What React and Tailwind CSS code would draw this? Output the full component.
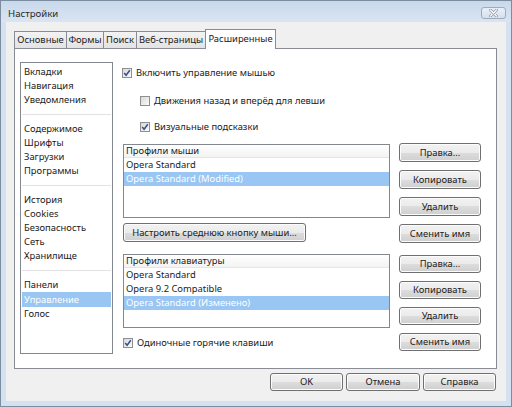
import React from 'react'

const font = "font-['Noto_Sans',sans-serif] text-[9.4px] text-[#1b1b1b]"

const Check = ({ checked }) => (
  <span className="flex h-[10px] w-[10px] shrink-0 items-center justify-center border border-[#8f8f8f] bg-gradient-to-br from-[#d8d8d8] to-[#fbfbfb]">
    {checked && (
      <svg width="8" height="8" viewBox="0 0 8 8">
        <path d="M1.2 4 L3.1 6.3 L6.8 1.3" fill="none" stroke="#35508a" strokeWidth="1.5" />
      </svg>
    )}
  </span>
)

const CheckRow = ({ checked, label, className = '' }) => (
  <div className={`flex h-[14px] items-center gap-[4px] ${className}`}>
    <Check checked={checked} />
    <span className="whitespace-nowrap leading-none">{label}</span>
  </div>
)

const Btn = ({ children, className = '' }) => (
  <div
    className={`flex items-center justify-center whitespace-nowrap rounded-[3px] border border-[#707070] bg-[linear-gradient(#f2f2f2_0%,#ebebeb_50%,#dddddd_50%,#cfcfcf_100%)] leading-none shadow-[inset_0_0_0_1px_#fcfcfc] ${className}`}>
    {children}
  </div>
)

const ProfileList = ({ title, items, selected }) => (
  <div className="flex h-[74px] w-[267px] flex-col border border-[#828790] bg-white">
    <div className="flex h-[13px] items-center border-b border-[#e5e5e5] bg-gradient-to-b from-white to-[#f3f3f3] pl-[2px] leading-none">
      {title}
    </div>
    {items.map((it, i) => (
      <div
        key={it}
        className={`flex h-[14px] items-center whitespace-nowrap pl-[2px] leading-none ${
          i === selected ? 'bg-[#99c6f2] text-white' : ''
        }`}>
        {it}
      </div>
    ))}
  </div>
)

const tabs = [
  { label: 'Основные', w: 'w-[53px]' },
  { label: 'Формы', w: 'w-[38px]' },
  { label: 'Поиск', w: 'w-[34px]' },
  { label: 'Веб-страницы', w: 'w-[70px]' },
]

const groups = [
  ['Вкладки', 'Навигация', 'Уведомления'],
  ['Содержимое', 'Шрифты', 'Загрузки', 'Программы'],
  ['История', 'Cookies', 'Безопасность', 'Сеть', 'Хранилище'],
  ['Панели', 'Управление', 'Голос'],
]

export default function App() {
  return (
    <div className={`flex h-[407px] w-[512px] flex-col border border-[#7d8da0] bg-[#d3e1f1] ${font}`}>
      {/* title bar */}
      <div className="flex h-[21px] shrink-0 items-center justify-between bg-gradient-to-b from-[#c9d8ec] to-[#dae5f2] pl-[7px] pr-[5px]">
        <span className="mt-[5px] text-[9.6px] text-[#2a2a2a]">Настройки</span>
        <div className="mt-[3px] flex h-[12px] w-[25px] items-center justify-center rounded-[3px] border border-[#9eabbb] bg-gradient-to-b from-[#e9eff7] to-[#d5e0ee]">
          <svg width="9" height="8" viewBox="0 0 9 8">
            <path d="M1.5 1 L7.5 7 M7.5 1 L1.5 7" stroke="#8a95a3" strokeWidth="2.6" strokeLinecap="round" />
            <path d="M1.5 1 L7.5 7 M7.5 1 L1.5 7" stroke="#ffffff" strokeWidth="1.2" strokeLinecap="round" />
          </svg>
        </div>
      </div>

      {/* body */}
      <div className="mx-[5px] flex h-[379px] flex-col bg-[#f0f0f0] pl-[8px] pr-[9px] pt-[8px]">
        {/* tabs */}
        <div className="flex h-[18px] items-end">
          {tabs.map((t) => (
            <div
              key={t.label}
              className={`${t.w} -mr-px flex h-[17px] items-center justify-center whitespace-nowrap border border-b-0 border-[#898c95] bg-gradient-to-b from-[#f3f3f3] to-[#e3e3e3] leading-none`}>
              {t.label}
            </div>
          ))}
          <div className="relative z-10 -mb-px flex h-[20px] w-[71px] items-center justify-center whitespace-nowrap border border-b-0 border-[#898c95] bg-white pb-[2px] leading-none">
            Расширенные
          </div>
        </div>

        {/* panel */}
        <div className="flex h-[321px] items-start border border-[#898c95] bg-white pl-[5px]">
          {/* left list */}
          <div className="mt-[13px] flex h-[292px] w-[93px] flex-col border border-[#828790] bg-white p-px pt-[2px]">
            {groups.map((g, gi) => (
              <React.Fragment key={gi}>
                {gi > 0 && (
                  <div className="flex h-[15px] items-center">
                    <div className="h-[2px] w-full border-t border-[#e2e2e2] bg-white" />
                  </div>
                )}
                {g.map((it) => (
                  <div
                    key={it}
                    className={`flex h-[14px] items-center pl-[2px] leading-none ${
                      it === 'Управление' ? 'h-[15px] bg-[#99c6f2] text-white' : ''
                    }`}>
                    {it}
                  </div>
                ))}
              </React.Fragment>
            ))}
          </div>

          {/* right side */}
          <div className="ml-[9px] mt-[17px] flex flex-col">
            <CheckRow checked label="Включить управление мышью" />
            <CheckRow label="Движения назад и вперёд для левши" className="ml-[18px] mt-[14px]" />
            <CheckRow checked label="Визуальные подсказки" className="ml-[18px] mt-[12px]" />

            <div className="ml-px mt-[9px] flex items-start gap-[9px]">
              <div className="mt-px flex flex-col">
                <ProfileList
                  title="Профили мыши"
                  items={['Opera Standard', 'Opera Standard (Modified)']}
                  selected={1}
                />
                <Btn className="mt-[5px] h-[19px] w-[183px]">Настроить среднюю кнопку мыши...</Btn>
                <div className="mt-[12px]">
                  <ProfileList
                    title="Профили клавиатуры"
                    items={['Opera Standard', 'Opera 9.2 Compatible', 'Opera Standard (Изменено)']}
                    selected={2}
                  />
                </div>
                <CheckRow checked label="Одиночные горячие клавиши" className="mt-[8px]" />
              </div>

              <div className="flex w-[82px] flex-col gap-[8px]">
                <Btn className="h-[19px]">Правка...</Btn>
                <Btn className="h-[19px]">Копировать</Btn>
                <Btn className="h-[19px]">Удалить</Btn>
                <Btn className="h-[19px]">Сменить имя</Btn>
                <Btn className="mt-[4px] h-[18px]">Правка...</Btn>
                <Btn className="h-[18px]">Копировать</Btn>
                <Btn className="h-[18px]">Удалить</Btn>
                <Btn className="h-[18px]">Сменить имя</Btn>
              </div>
            </div>
          </div>
        </div>

        {/* bottom buttons */}
        <div className="mt-[4px] flex justify-end gap-[3px] pr-px">
          <Btn className="h-[18px] w-[73px]">OK</Btn>
          <Btn className="h-[18px] w-[74px]">Отмена</Btn>
          <Btn className="h-[18px] w-[73px]">Справка</Btn>
        </div>
      </div>
    </div>
  )
}
